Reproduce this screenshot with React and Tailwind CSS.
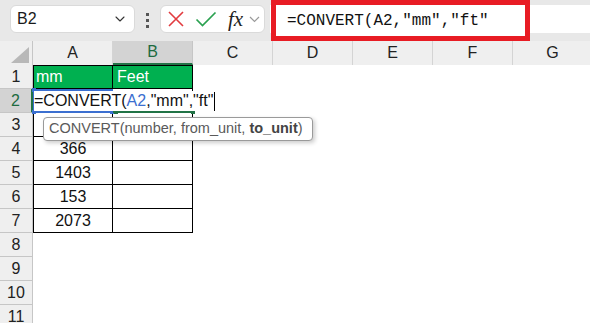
import { ChevronDown } from "lucide-react";

const COLS = ["A", "B", "C", "D", "E", "F", "G"];
const VALUES = { 4: "366", 5: "1403", 6: "153", 7: "2073" };

const Toolbar = () => (
  <div className="relative flex h-[41px] items-start bg-[#e8e8e8] pt-[5px]">
    {/* name box */}
    <div className="ml-[10px] flex h-[28px] w-[125px] items-center justify-between rounded-[6px] border border-[#dadada] bg-white pl-[6px] pr-[6px]">
      <span className="text-[16px] text-[#1a1a1a]">B2</span>
      <ChevronDown size={16} strokeWidth={1.6} className="text-[#333]" />
    </div>

    {/* grip */}
    <div className="ml-[11px] mt-[8px] flex flex-col gap-[3px]">
      <span className="h-[3px] w-[3px] bg-[#555]" />
      <span className="h-[3px] w-[3px] bg-[#555]" />
      <span className="h-[3px] w-[3px] bg-[#555]" />
    </div>

    {/* cancel / enter / fx */}
    <div className="ml-[11px] flex h-[28px] w-[105px] items-center rounded-[6px] border border-[#dadada] bg-white">
      <svg width="18" height="18" viewBox="0 0 18 18" className="ml-[6px]">
        <path d="M2 2 L16 16 M16 2 L2 16" stroke="#e23b3f" strokeWidth="1.6" fill="none" />
      </svg>
      <svg width="22" height="18" viewBox="0 0 22 18" className="ml-[10px]">
        <path d="M1.5 9.5 L7.5 15.5 L20.5 2.5" stroke="#2aa150" strokeWidth="1.7" fill="none" />
      </svg>
      <span className="ml-[11px] font-['Liberation_Serif',serif] text-[21px] italic leading-none text-[#222]">
        fx
      </span>
      <svg width="11" height="7" viewBox="0 0 11 7" className="ml-[6px]">
        <path d="M1 1 L5.5 5.5 L10 1" stroke="#9a9a9a" strokeWidth="1.2" fill="none" />
      </svg>
    </div>

    {/* formula bar */}
    <div className="ml-[5px] h-[28px] flex-1 bg-white" />

    {/* red annotation box */}
    <div className="absolute left-[271px] top-0 flex h-[41px] w-[259px] items-center border-[5px] border-[#e81c24] bg-white pl-[11px]">
      <span className="font-['Liberation_Mono',monospace] text-[16px] text-[#111]">
        =CONVERT(A2,"mm","ft"
      </span>
    </div>
  </div>
);

const HeaderRow = () => (
  <div className="flex h-[24px] bg-[#efefef] text-[16px] text-[#222]">
    <div className="relative h-full w-[33px] shrink-0 border-r border-[#c6c6c6]">
      <svg width="18" height="16" viewBox="0 0 18 16" className="absolute bottom-[2px] right-[3px]">
        <path d="M18 0 L18 16 L0 16 Z" fill="#b8b8b8" />
      </svg>
    </div>
    {COLS.map((c) =>
      c === "B" ? (
        <div
          key={c}
          className="flex h-full w-[80px] shrink-0 items-center justify-center border-r border-b-2 border-r-[#c6c6c6] border-b-[#217346] bg-[#d3d3d3] text-[#1d6b3f]"
        >
          {c}
        </div>
      ) : (
        <div
          key={c}
          className="flex h-full w-[80px] shrink-0 items-center justify-center border-r border-[#d4d4d4]"
        >
          {c}
        </div>
      )
    )}
  </div>
);

const RowHead = ({ n, active }) => (
  <div
    className={
      active
        ? "flex h-full w-[33px] shrink-0 items-center justify-center border-b border-r-2 border-b-[#c6c6c6] border-r-[#217346] bg-[#d3d3d3] text-[#1d6b3f]"
        : "flex h-full w-[33px] shrink-0 items-center justify-center border-b border-r border-[#c6c6c6] bg-[#efefef] text-[#222]"
    }
  >
    {n}
  </div>
);

const Sheet = () => {
  const rows = [];
  for (let r = 1; r <= 11; r++) {
    if (r === 1) {
      rows.push(
        <div key={r} className="flex h-[24px]">
          <RowHead n={r} />
          <div className="flex h-full w-[80px] shrink-0 items-center border border-[#000] bg-[#00b050] pl-[2px] text-white">
            mm
          </div>
          <div className="flex h-full w-[80px] shrink-0 items-center border-y border-r border-[#000] bg-[#00b050] pl-[4px] text-white">
            Feet
          </div>
        </div>
      );
    } else if (r === 2) {
      rows.push(
        <div key={r} className="relative flex h-[24px]">
          <RowHead n={r} active />
          <div className="relative h-full w-[80px] shrink-0 border-2 border-[#3b6fd0]">
            <span className="absolute -left-[3px] -top-[3px] h-[4px] w-[4px] bg-[#3b6fd0]" />
            <span className="absolute -bottom-[3px] -left-[3px] h-[4px] w-[4px] bg-[#3b6fd0]" />
            <span className="absolute -bottom-[3px] -right-[3px] h-[4px] w-[4px] bg-[#3b6fd0]" />
          </div>
          <div className="relative h-full w-[80px] shrink-0 border-b-2 border-r border-b-[#217346] border-r-[#000]">
            <span className="absolute -bottom-[3px] left-[1px] h-[4px] w-[4px] bg-[#217346]" />
            <span className="absolute -bottom-[3px] -right-[3px] h-[4px] w-[4px] bg-[#217346]" />
          </div>
          {/* in-cell editing text */}
          <div className="absolute left-[34px] top-[2px] flex h-[20px] items-center whitespace-pre bg-white pr-[1px] text-[16px] text-[#111]">
            <span>=CONVERT(</span>
            <span className="text-[#3b6fd0]">A2</span>
            <span>,"mm","ft"</span>
            <span className="ml-[1px] h-[19px] w-px bg-black" />
          </div>
        </div>
      );
    } else if (r <= 7) {
      rows.push(
        <div key={r} className="flex h-[24px]">
          <RowHead n={r} />
          <div className="flex h-full w-[80px] shrink-0 items-center justify-center border-x border-b border-[#000] text-[#111]">
            {VALUES[r] || ""}
          </div>
          <div className="h-full w-[80px] shrink-0 border-b border-r border-[#000]" />
        </div>
      );
    } else {
      rows.push(
        <div key={r} className="flex h-[24px]">
          <RowHead n={r} />
        </div>
      );
    }
  }

  return (
    <div className="relative">
      {rows}
      {/* function tooltip */}
      <div className="absolute left-[43px] top-[52px] flex h-[24px] w-[270px] items-center rounded-[4px] border border-[#9a9a9a] bg-white pl-[5px] text-[14.5px] text-[#5a5a5a] shadow-[2px_2px_4px_rgba(0,0,0,0.2)]">
        CONVERT(number, from_unit,&nbsp;<b className="font-bold text-[#444]">to_unit</b>)
      </div>
    </div>
  );
};

export default function App() {
  return (
    <div className="h-[323px] w-[590px] overflow-hidden bg-white font-['Liberation_Sans',Arial,sans-serif] text-[16px]">
      <Toolbar />
      <HeaderRow />
      <Sheet />
    </div>
  );
}
